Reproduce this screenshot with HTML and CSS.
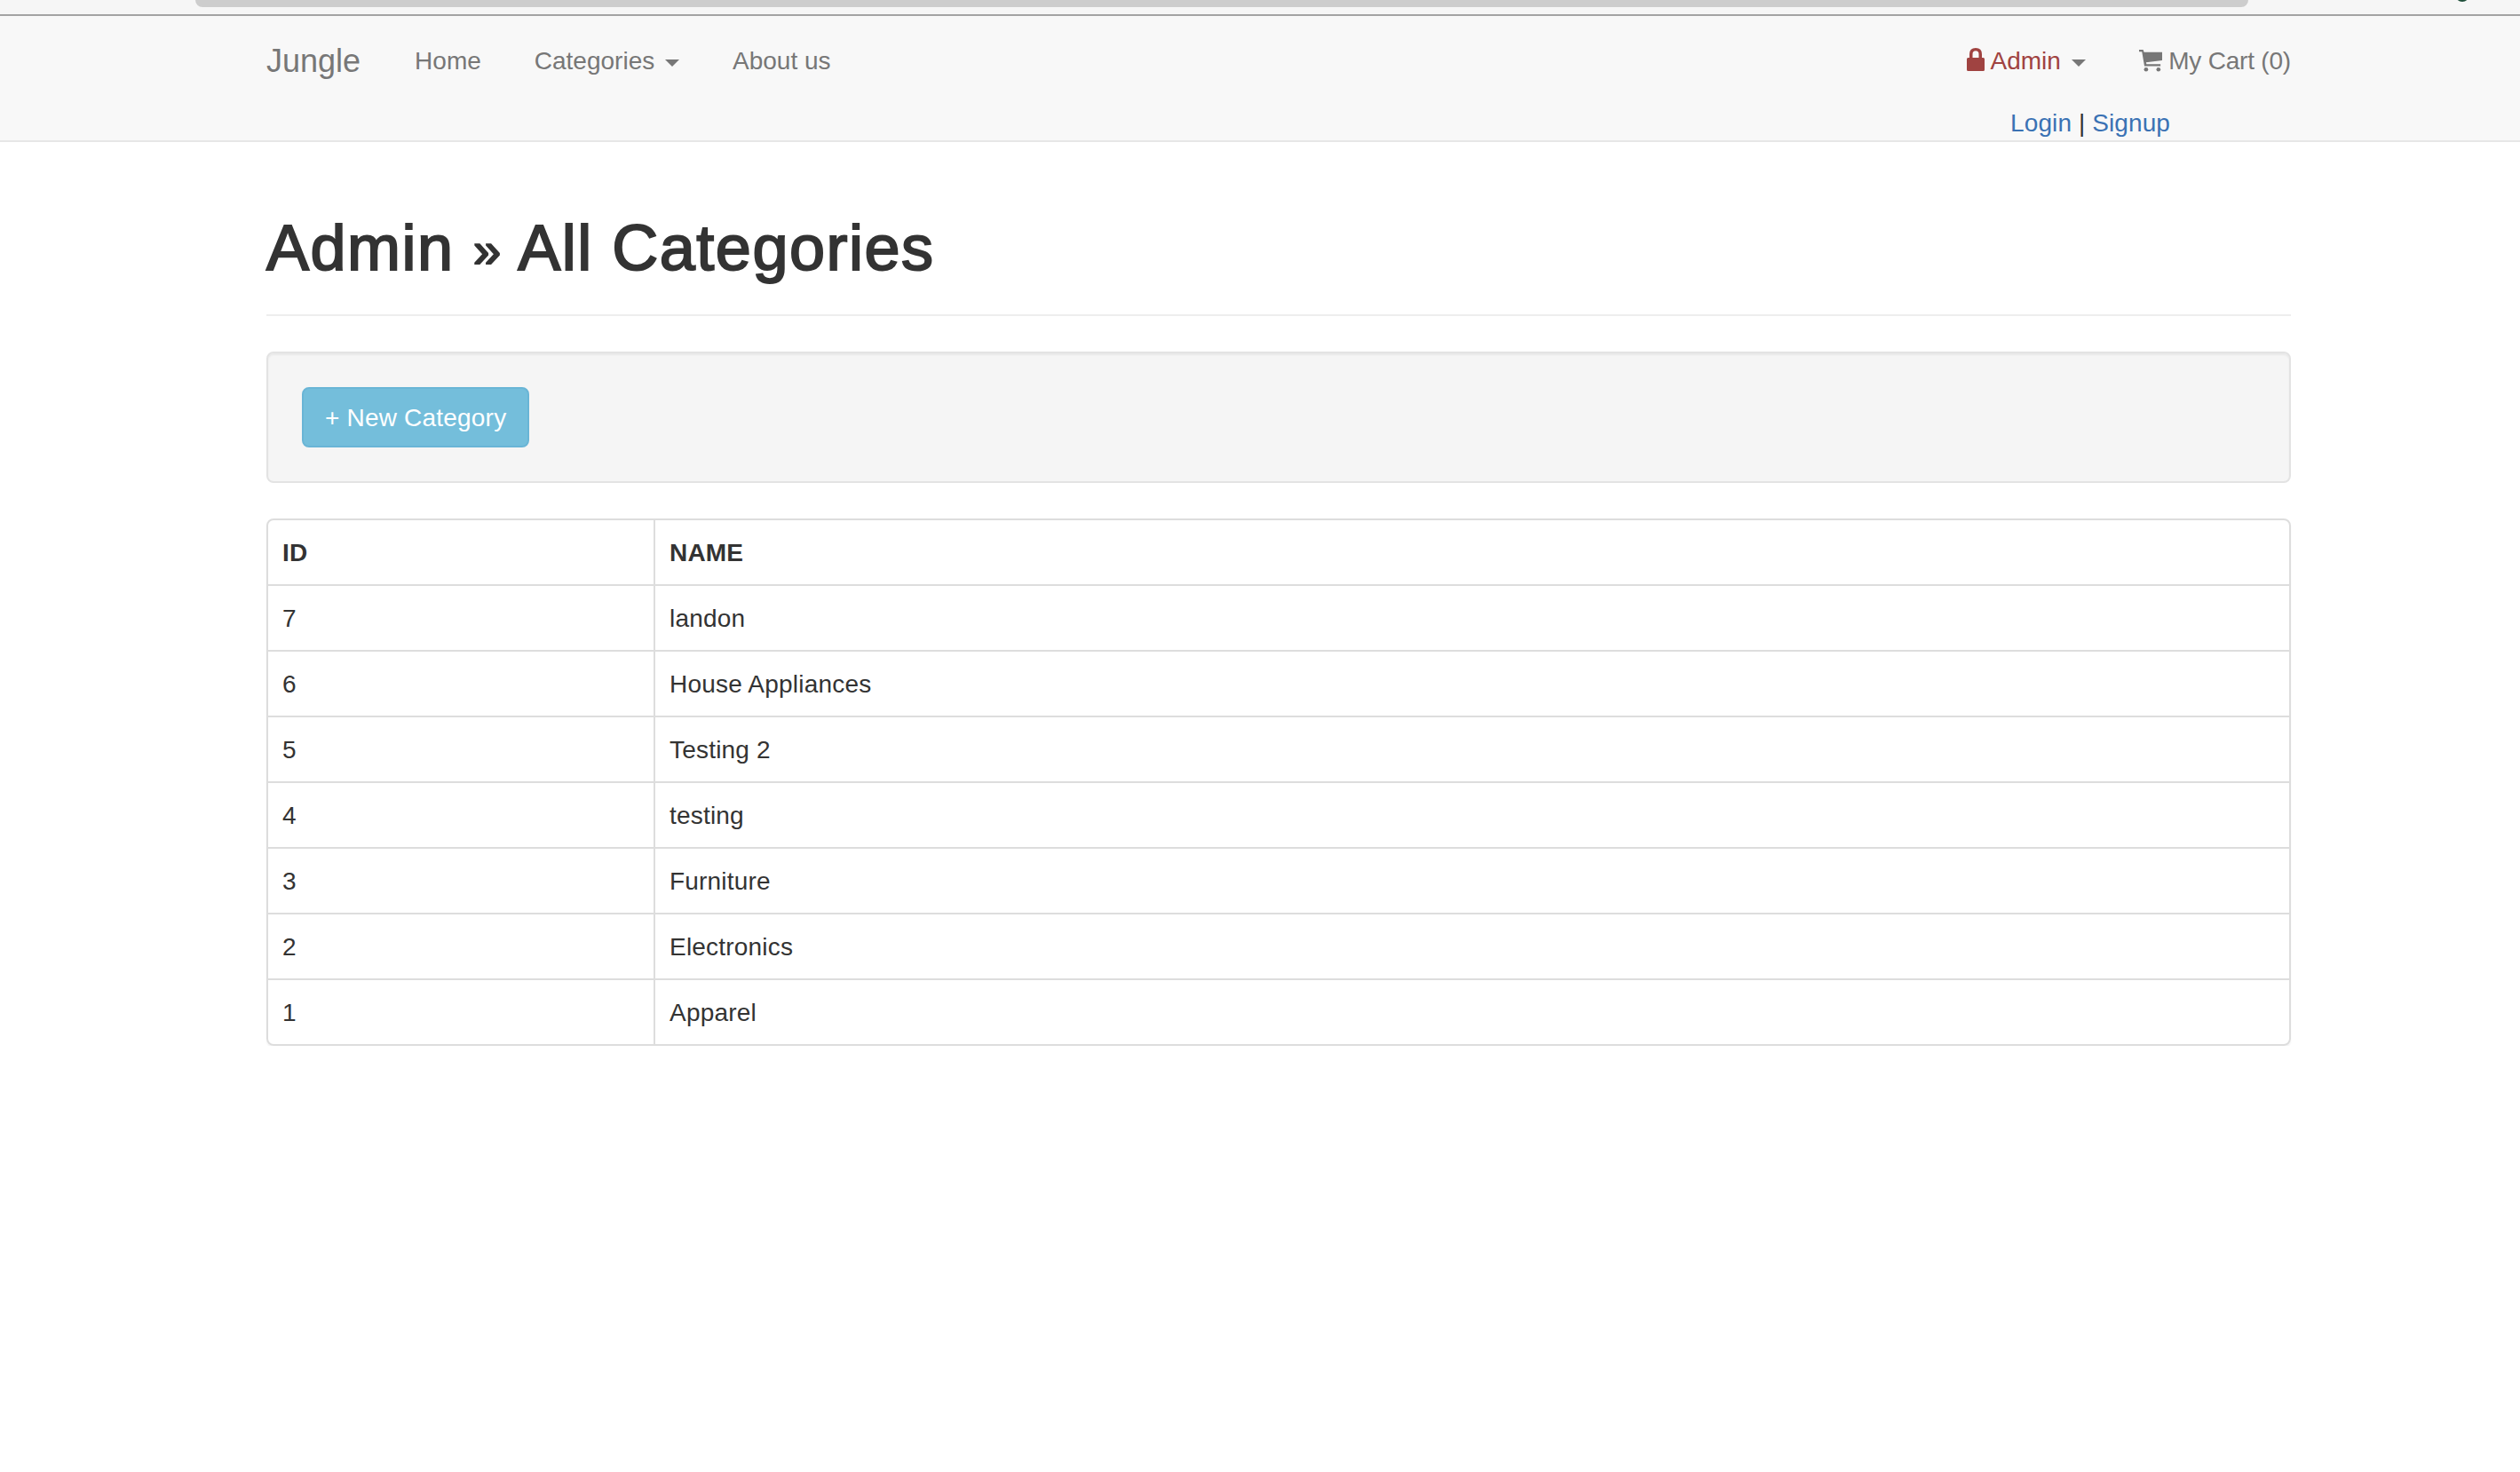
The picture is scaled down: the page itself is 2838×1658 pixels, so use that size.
FILE: index.html
```html
<!DOCTYPE html>
<html lang="en">

<head>
    <meta charset="UTF-8">
    <title>Jungle</title>
    <link rel="stylesheet" href="styles.css">
</head>

<body>
    <div class="browser-strip">
        <div class="browser-scroll"></div>
        <div class="browser-dot"></div>
    </div>

    <nav class="navbar">
        <div class="navbar-left">
            <a class="brand" href="#">Jungle</a>
            <a class="nav-link" href="#">Home</a>
            <a class="nav-link" href="#">Categories <span class="caret"></span></a>
            <a class="nav-link" href="#">About us</a>
        </div>
        <div class="navbar-right">
            <div class="navbar-right-links">
                <a class="nav-link text-danger" href="#">
                    <svg class="icon-lock" viewBox="0 0 20 26" aria-hidden="true">
                        <path d="M0 12.5 Q0 11 1.5 11 L3 11 L3 7 Q3 0 10 0 Q17 0 17 7 L17 11 L18.500 11 Q20 11 20 12.500 L20 24.500 Q20 26 18.500 26 L1.500 26 Q0 26 0 24.500 Z M6.500 11 L13.500 11 L13.500 7 Q13.500 3.300 10 3.300 Q6.500 3.300 6.500 7 Z" fill-rule="evenodd" />
                    </svg>
                    Admin <span class="caret caret-muted"></span>
                </a>
                <a class="nav-link nav-cart" href="#">
                    <svg class="icon-cart" viewBox="0 0 28 28" aria-hidden="true">
                        <path d="M0 1 L5 1 L6 4 L28 4 L28 14 L8.500 16.500 L9 18.500 L26 18.500 L26 21 L6.500 21 L3.500 3.500 L0 3.500 Z" />
                        <circle cx="8.500" cy="25" r="2.500" />
                        <circle cx="23.500" cy="25" r="2.500" />
                    </svg>
                    My Cart (0)
                </a>
            </div>
            <div class="auth-links"><a href="#">Login</a> | <a href="#">Signup</a></div>
        </div>
    </nav>

    <main class="container">
        <h1 class="page-header">Admin <span class="crumb-sep">»</span> All Categories</h1>

        <div class="well">
            <a class="btn-info" href="#">+ New Category</a>
        </div>

        <div class="table-wrap">
            <table class="categories">
                <thead>
                    <tr>
                        <th class="col-id">ID</th>
                        <th>NAME</th>
                    </tr>
                </thead>
                <tbody>
                    <tr><td>7</td><td>landon</td></tr>
                    <tr><td>6</td><td>House Appliances</td></tr>
                    <tr><td>5</td><td>Testing 2</td></tr>
                    <tr><td>4</td><td>testing</td></tr>
                    <tr><td>3</td><td>Furniture</td></tr>
                    <tr><td>2</td><td>Electronics</td></tr>
                    <tr><td>1</td><td>Apparel</td></tr>
                </tbody>
            </table>
        </div>
    </main>
</body>

</html>
```

FILE: styles.css
```css
body {
    margin: 0;
    font-family: "Liberation Sans", Arial, sans-serif;
    font-size: 28px;
    line-height: 40px;
    letter-spacing: 0.2px;
    color: #333;
    background-color: #fff;
}

a {
    color: #3a72b4;
    text-decoration: none;
}

/* sliver of the browser chrome at the top */
.browser-strip {
    height: 16px;
    padding: 0 57px 0 220px;
    display: flex;
    background-color: #f6f6f6;
    border-bottom: 2px solid #a3a3a3;
    overflow: hidden;
}

.browser-scroll {
    flex: 1;
    height: 8px;
    background-color: #cdcdcd;
    border-radius: 0 0 20px 20px;
}

.browser-dot {
    width: 16px;
    height: 16px;
    margin: -14px 0 0 233px;
    border-radius: 50%;
    background-color: #1f4f3a;
}

.navbar {
    height: 140px;
    padding: 0 228px 0 300px;
    display: flex;
    justify-content: space-between;
    background-color: #f8f8f8;
    border-bottom: 2px solid #e7e7e7;
}

.navbar-left,
.navbar-right-links {
    display: flex;
    align-items: flex-start;
    letter-spacing: 0;
}

.brand {
    padding: 31px 31px 0 0;
    font-size: 36px;
    color: #777;
}

.nav-link {
    padding: 31px 30px 29px;
    color: #777;
    white-space: nowrap;
}

.nav-cart {
    letter-spacing: -0.2px;
}

.text-danger {
    color: #a04341;
}

.caret {
    display: inline-block;
    width: 0;
    height: 0;
    margin-left: 4px;
    vertical-align: middle;
    border-top: 8px solid;
    border-left: 8px solid transparent;
    border-right: 8px solid transparent;
}

.caret-muted {
    color: #777;
}

.icon-lock {
    width: 20px;
    height: 26px;
    fill: #a04341;
    vertical-align: -2px;
}

.icon-cart {
    width: 26px;
    height: 26px;
    fill: #777;
    vertical-align: -3px;
}

.navbar-right {
    display: flex;
    flex-direction: column;
}

.auth-links {
    margin-top: 1px;
    align-self: flex-end;
    padding-right: 166px;
    letter-spacing: 0.1px;
}

.container {
    width: 2280px;
    margin-left: 300px;
}

.page-header {
    margin: 80px 0 40px;
    padding-bottom: 35px;
    font-size: 72px;
    line-height: 79px;
    font-weight: 400;
    letter-spacing: 1.5px;
    -webkit-text-stroke: 2px #333;
    border-bottom: 2px solid #eee;
}

.crumb-sep {
    font-size: 56px;
    line-height: 1;
    vertical-align: 3px;
}

.well {
    padding: 38px;
    margin-bottom: 40px;
    background-color: #f5f5f5;
    border: 2px solid #e3e3e3;
    border-radius: 8px;
    box-shadow: inset 0 2px 2px rgba(0, 0, 0, 0.05);
}

.btn-info {
    display: inline-block;
    padding: 13px 24px 11px;
    color: #fff;
    background-color: #74bedb;
    border: 2px solid #69b5d6;
    border-radius: 8px;
    vertical-align: top;
}

.table-wrap {
    border: 2px solid #ddd;
    border-radius: 8px;
    overflow: hidden;
    box-shadow: 0 2px 2px rgba(0, 0, 0, 0.05);
}

.categories {
    width: 100%;
    border-collapse: collapse;
}

.categories th,
.categories td {
    padding: 17px 16px 15px;
    text-align: left;
    border-top: 2px solid #ddd;
    border-left: 2px solid #ddd;
}

.categories tr:first-child th {
    border-top: 0;
}

.categories th:first-child,
.categories td:first-child {
    border-left: 0;
}

.col-id {
    width: 402px;
}
```
